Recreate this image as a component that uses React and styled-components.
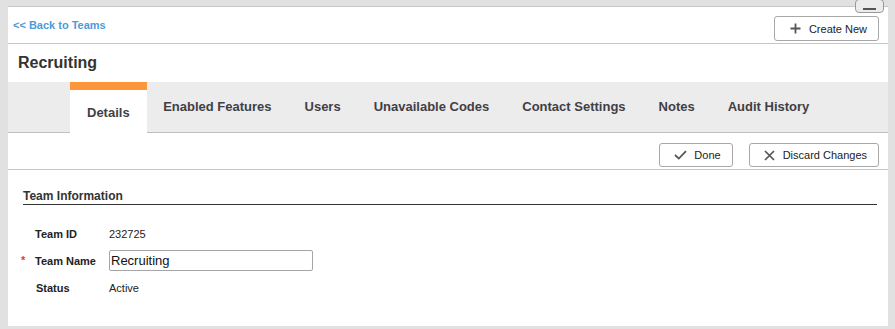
import React from "react";
import styled, { createGlobalStyle } from "styled-components";

const GlobalStyle = createGlobalStyle`
    html, body {
        margin: 0;
        padding: 0;
        background: #e1e1e1;
        font-family: "Liberation Sans", Arial, sans-serif;
    }
    body {
        padding: 6px 7px 3px 8px;
        box-sizing: border-box;
    }
`;

const WindowControl = styled.div`
    position: absolute;
    top: -8px;
    left: 847px;
    width: 27px;
    height: 12px;
    border: 1px solid #9a9a9a;
    border-radius: 4px;
    background: #ececec;
    &::after {
        content: "";
        position: absolute;
        left: 7px;
        bottom: 2px;
        width: 13px;
        height: 2px;
        background: #555;
    }
`;

const Panel = styled.div`
    position: relative;
    width: 880px;
    height: 320px;
    background: #fff;
    border-top: 1px solid #c6c6c6;
    box-sizing: border-box;
    color: #333;
`;

const TopBar = styled.div`
    display: flex;
    justify-content: space-between;
    align-items: flex-start;
    height: 37px;
    padding: 9px 9px 0 5px;
    box-sizing: border-box;
    border-bottom: 1px solid #c6c6c6;
`;

const BackLink = styled.a`
    font-size: 11px;
    font-weight: bold;
    color: #4c9bd8;
    text-decoration: none;
    margin-top: 3px;
    cursor: pointer;
`;

const Button = styled.button`
    display: inline-flex;
    align-items: center;
    gap: ${p => p.$gap || 8}px;
    height: ${p => p.$h || 24}px;
    padding: 0 11px 0 ${p => p.$pl || 14}px;
    background: #fff;
    border: 1px solid #a8a8a8;
    border-radius: 3px;
    font-family: "Liberation Sans", Arial, sans-serif;
    font-size: 11px;
    color: #222;
    cursor: pointer;
    svg {
        flex: none;
    }
`;

const Title = styled.h1`
    margin: 0;
    height: 38px;
    display: flex;
    align-items: center;
    padding-left: 10px;
    font-size: 16px;
    font-weight: bold;
    color: #333;
`;

const TabBar = styled.div`
    display: flex;
    height: 51px;
    padding-left: 62px;
    background: #ececec;
    border-bottom: 1px solid #c0c0c0;
    box-sizing: border-box;
`;

const Tab = styled.div`
    display: flex;
    align-items: center;
    padding: ${p => (p.$active ? "2px 17px 0" : "0 16.5px 1px")};
    font-size: 13px;
    font-weight: bold;
    color: #3f3f46;
    background: ${p => (p.$active ? "#fff" : "transparent")};
    border-top: ${p => (p.$active ? "8px solid #fd963a" : "none")};
    margin-bottom: ${p => (p.$active ? "-1px" : "0")};
    cursor: pointer;
`;

const Toolbar = styled.div`
    display: flex;
    justify-content: flex-end;
    gap: 16px;
    height: 37px;
    padding: 10px 9px 0 0;
    box-sizing: border-box;
    border-bottom: 1px solid #c6c6c6;
`;

const Section = styled.div`
    padding: 20px 11px 0 15px;
`;

const SectionTitle = styled.div`
    font-size: 12px;
    line-height: 13px;
    font-weight: bold;
    color: #333;
    padding-bottom: 1px;
    border-bottom: 1px solid #333;
`;

const Form = styled.div`
    display: grid;
    grid-template-columns: 74px auto;
    grid-auto-rows: 27px;
    align-items: center;
    padding: 15px 0 0 12px;
`;

const Label = styled.div`
    position: relative;
    font-size: 11px;
    font-weight: bold;
    color: #222;
    padding-left: ${p => p.$pl || 0}px;
`;

const Required = styled.span`
    position: absolute;
    left: -14px;
    top: -1px;
    color: #e53935;
    font-weight: bold;
    font-size: 11px;
`;

const Value = styled.div`
    font-size: 11px;
    color: #222;
`;

const TextInput = styled.input`
    width: 204px;
    height: 21px;
    box-sizing: border-box;
    border: 1px solid #a5a5a5;
    border-radius: 2px;
    padding: 0 1px;
    font-family: "Liberation Sans", Arial, sans-serif;
    font-size: 13px;
    color: #111;
    outline: none;
`;

const PlusIcon = () => (
    <svg width="11" height="11" viewBox="0 0 11 11">
        <path d="M5.5 0.5v10M0.5 5.5h10" stroke="#555" strokeWidth="1.8" />
    </svg>
);

const CheckIcon = () => (
    <svg width="13" height="10" viewBox="0 0 13 10">
        <path d="M1 5l3.8 3.6L12 1.2" stroke="#555" strokeWidth="1.8" fill="none" />
    </svg>
);

const CloseIcon = () => (
    <svg width="11" height="11" viewBox="0 0 11 11">
        <path d="M1 1l9 9M10 1l-9 9" stroke="#555" strokeWidth="1.7" />
    </svg>
);

const tabs = ["Details", "Enabled Features", "Users", "Unavailable Codes", "Contact Settings", "Notes", "Audit History"];

const App = () => {
    return (
        <>
            <GlobalStyle />
            <Panel>
                <WindowControl />
                <TopBar>
                    <BackLink>&lt;&lt; Back to Teams</BackLink>
                    <Button $h={25} $pl={15}><PlusIcon />Create New</Button>
                </TopBar>
                <Title>Recruiting</Title>
                <TabBar>
                    {tabs.map((t, i) => (
                        <Tab key={t} $active={i === 0}>{t}</Tab>
                    ))}
                </TabBar>
                <Toolbar>
                    <Button $gap={7}><CheckIcon />Done</Button>
                    <Button $gap={8}><CloseIcon />Discard Changes</Button>
                </Toolbar>
                <Section>
                    <SectionTitle>Team Information</SectionTitle>
                    <Form>
                        <Label>Team ID</Label>
                        <Value>232725</Value>
                        <Label><Required>*</Required>Team Name</Label>
                        <TextInput defaultValue="Recruiting" />
                        <Label $pl={1}>Status</Label>
                        <Value>Active</Value>
                    </Form>
                </Section>
            </Panel>
        </>
    );
};

export default App;
